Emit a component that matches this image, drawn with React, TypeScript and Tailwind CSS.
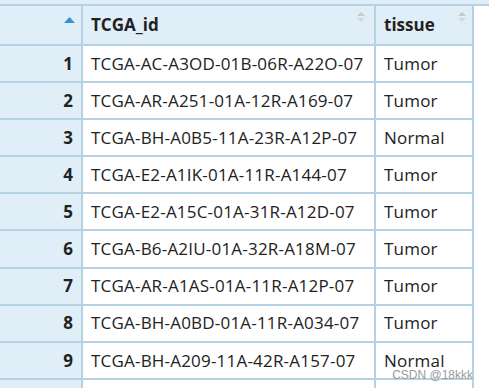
import React from "react";

const rows = [
  ["1", "TCGA-AC-A3OD-01B-06R-A22O-07", "Tumor"],
  ["2", "TCGA-AR-A251-01A-12R-A169-07", "Tumor"],
  ["3", "TCGA-BH-A0B5-11A-23R-A12P-07", "Normal"],
  ["4", "TCGA-E2-A1IK-01A-11R-A144-07", "Tumor"],
  ["5", "TCGA-E2-A15C-01A-31R-A12D-07", "Tumor"],
  ["6", "TCGA-B6-A2IU-01A-32R-A18M-07", "Tumor"],
  ["7", "TCGA-AR-A1AS-01A-11R-A12P-07", "Tumor"],
  ["8", "TCGA-BH-A0BD-01A-11R-A034-07", "Tumor"],
  ["9", "TCGA-BH-A209-11A-42R-A157-07", "Normal"],
];

function SortIcon() {
  return (
    <svg width="8" height="10" viewBox="0 0 8 10" className="shrink-0">
      <path d="M0 4 L4 0 L8 4 Z" fill="#c9c9c9" />
      <path d="M0 6 L4 10 L8 6 Z" fill="#d6d6d6" />
    </svg>
  );
}

export default function App() {
  return (
    <div
      className="relative w-[489px] h-[388px] overflow-hidden bg-white text-[#222]"
      style={{ fontFamily: '"Open Sans", "Liberation Sans", sans-serif' }}
    >
      <div className="h-[4px] bg-[#e0eef8]" />
      <div className="border-t-2 border-[#b6d3e5]" />

      <div className="w-[474px] border-r-2 border-[#b6d3e5]">
        {/* Header */}
        <div className="flex h-[40px] border-b-2 border-[#b6d3e5] bg-[#e0eef8]">
          <div className="relative w-[83px] shrink-0 border-r-2 border-[#b6d3e5]">
            <svg width="11" height="6" viewBox="0 0 11 6" className="absolute left-[64px] top-[11px]">
              <path d="M0 6 L5.5 0 L11 6 Z" fill="#3b8edb" />
            </svg>
          </div>
          <div className="relative flex w-[293px] shrink-0 items-center border-r-2 border-[#b6d3e5] pl-[8px] pr-[8px]">
            <span className="text-[17px] font-bold">TCGA_id</span>
            <div className="absolute right-[9px] top-[6px]">
              <SortIcon />
            </div>
          </div>
          <div className="relative flex flex-1 items-center pl-[8px]">
            <span className="text-[17px] font-bold">tissue</span>
            <div className="absolute right-[6px] top-[6px]">
              <SortIcon />
            </div>
          </div>
        </div>

        {/* Body */}
        {rows.map(([i, id, tissue]) => (
          <div key={i} className="flex h-[37.1px] border-b-2 border-[#b6d3e5]">
            <div className="flex w-[83px] shrink-0 items-center justify-end border-r-2 border-[#b6d3e5] bg-[#e0eef8] pr-[8px]">
              <span className="text-[17px] font-bold">{i}</span>
            </div>
            <div className="flex w-[293px] shrink-0 items-center border-r-2 border-[#b6d3e5] pl-[8px]">
              <span className="text-[17px] tracking-[0.2px] whitespace-nowrap">{id}</span>
            </div>
            <div className="flex flex-1 items-center pl-[8px]">
              <span className="text-[17px] tracking-[0.2px]">{tissue}</span>
            </div>
          </div>
        ))}
        <div className="flex h-[20px]">
          <div className="w-[83px] shrink-0 border-r-2 border-[#b6d3e5] bg-[#e0eef8]" />
          <div className="w-[293px] shrink-0 border-r-2 border-[#b6d3e5]" />
          <div className="flex-1" />
        </div>
      </div>

      <span
        className="absolute right-[16px] top-[366px] text-[12px] text-[#9a9a9a]"
        style={{ fontFamily: '"Liberation Sans", sans-serif' }}
      >
        CSDN @18kkk
      </span>
    </div>
  );
}
